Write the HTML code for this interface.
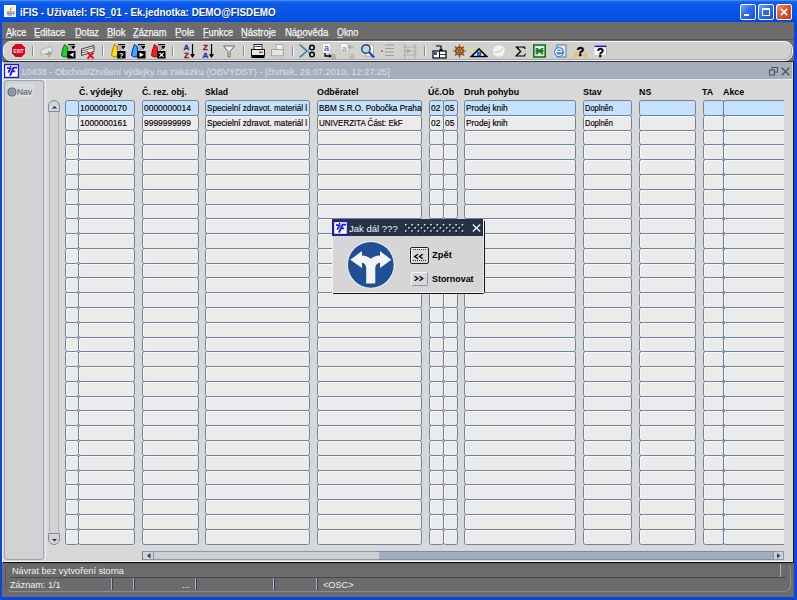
<!DOCTYPE html>
<html><head><meta charset="utf-8">
<style>
*{margin:0;padding:0;box-sizing:border-box}
html,body{width:797px;height:600px;overflow:hidden;background:#0a46dc;font-family:"Liberation Sans",sans-serif;position:relative}
.a{position:absolute}
svg.a{overflow:visible}
.t{position:absolute;line-height:1;white-space:nowrap;transform-origin:0 0}
#title{left:0;top:0;width:797px;height:22px;background:linear-gradient(#5aa0fa 0px,#1a66f0 1.5px,#0a58ea 4px,#0855e8 12px,#0652e4 18px,#0447d8 22px)}
.f{position:absolute;background:#ebebeb;border:1px solid #6d839f;border-radius:2.5px;box-shadow:inset 1px 1px 0 #f8f8f8}
.f.cur{background:#c6e2fa;box-shadow:none}
</style></head><body>
<div id="title" class="a"></div>
<svg class="a" style="left:4px;top:5px" width="12" height="12" viewBox="0 0 12 12"><rect x="0" y="0" width="12" height="12" fill="#f8f4ea"/>
<path d="M7.5 1.5 Q9 3 7 4.5 Q6 5.5 7 6.5 Q4.5 5.5 6.5 3.5 Q7.5 2.5 7.5 1.5Z" fill="#f07818"/>
<path d="M2.5 7 H9 M3 8.5 H8.5 M3.5 10 H8" stroke="#5a78a8" stroke-width="0.9"/><path d="M9.5 6.5 Q11.5 8 9 10" stroke="#3a5890" stroke-width="0.9" fill="none"/></svg>
<div class="t" style="left:19.90px;top:7.06px;font-size:10.8px;font-weight:bold;color:#fff;transform:scaleX(0.9110);text-shadow:1px 1px 0 #0a2a7a">iFIS - Uživatel: FIS_01 - Ek.jednotka: DEMO@FISDEMO</div>
<div class="a" style="left:740px;top:4px;width:16px;height:16px;border:1px solid #fff;border-radius:2px;background:linear-gradient(135deg,#7aa8f8 0%,#2e6cf0 45%,#1a50d8 100%)"></div>
<div class="a" style="left:744px;top:14px;width:5px;height:2px;background:#fff"></div>
<div class="a" style="left:758px;top:4px;width:16px;height:16px;border:1px solid #fff;border-radius:2px;background:linear-gradient(135deg,#7aa8f8 0%,#2e6cf0 45%,#1a50d8 100%)"></div>
<div class="a" style="left:762px;top:8px;width:8px;height:8px;border:1px solid #fff;border-top:2px solid #fff"></div>
<div class="a" style="left:776px;top:4px;width:16px;height:16px;border:1px solid #fff;border-radius:2px;background:linear-gradient(135deg,#f49a7c 0%,#e2552a 45%,#c83c12 100%)"></div>
<svg class="a" style="left:780px;top:8px" width="8" height="8" viewBox="0 0 8 8"><path d="M0.8 0.8 L7.2 7.2 M7.2 0.8 L0.8 7.2" stroke="#fff" stroke-width="1.7"/></svg>
<div class="a" style="left:2px;top:22px;width:792px;height:40px;background:#6c6c6c"></div>
<div class="a" style="left:2px;top:39px;width:792px;height:1px;background:#555"></div>
<div class="t" style="left:5.50px;top:27.88px;font-size:10.3px;color:#f8f8f8;transform:scaleX(0.8865);-webkit-text-stroke:0.25px #f0f0f0">Akce</div>
<div class="a" style="left:6.0px;top:37.3px;width:5.5px;height:1px;background:#c8c8c8"></div>
<div class="t" style="left:34.40px;top:27.88px;font-size:10.3px;color:#f8f8f8;transform:scaleX(0.9110);-webkit-text-stroke:0.25px #f0f0f0">Editace</div>
<div class="a" style="left:34.9px;top:37.3px;width:5.5px;height:1px;background:#c8c8c8"></div>
<div class="t" style="left:74.50px;top:27.88px;font-size:10.3px;color:#f8f8f8;transform:scaleX(0.8882);-webkit-text-stroke:0.25px #f0f0f0">Dotaz</div>
<div class="a" style="left:75.0px;top:37.3px;width:5.5px;height:1px;background:#c8c8c8"></div>
<div class="t" style="left:106.60px;top:27.88px;font-size:10.3px;color:#f8f8f8;transform:scaleX(0.9183);-webkit-text-stroke:0.25px #f0f0f0">Blok</div>
<div class="a" style="left:107.1px;top:37.3px;width:5.5px;height:1px;background:#c8c8c8"></div>
<div class="t" style="left:132.50px;top:27.88px;font-size:10.3px;color:#f8f8f8;transform:scaleX(0.9003);-webkit-text-stroke:0.25px #f0f0f0">Záznam</div>
<div class="a" style="left:133.0px;top:37.3px;width:5.5px;height:1px;background:#c8c8c8"></div>
<div class="t" style="left:175.00px;top:27.88px;font-size:10.3px;color:#f8f8f8;transform:scaleX(0.9459);-webkit-text-stroke:0.25px #f0f0f0">Pole</div>
<div class="a" style="left:175.5px;top:37.3px;width:5.5px;height:1px;background:#c8c8c8"></div>
<div class="t" style="left:202.50px;top:27.88px;font-size:10.3px;color:#f8f8f8;transform:scaleX(0.8911);-webkit-text-stroke:0.25px #f0f0f0">Funkce</div>
<div class="a" style="left:203.0px;top:37.3px;width:5.5px;height:1px;background:#c8c8c8"></div>
<div class="t" style="left:241.40px;top:27.88px;font-size:10.3px;color:#f8f8f8;transform:scaleX(0.9151);-webkit-text-stroke:0.25px #f0f0f0">Nástroje</div>
<div class="a" style="left:241.9px;top:37.3px;width:5.5px;height:1px;background:#c8c8c8"></div>
<div class="t" style="left:284.80px;top:27.88px;font-size:10.3px;color:#f8f8f8;transform:scaleX(0.9199);-webkit-text-stroke:0.25px #f0f0f0">Nápověda</div>
<div class="a" style="left:298.0px;top:37.3px;width:5.5px;height:1px;background:#c8c8c8"></div>
<div class="t" style="left:336.80px;top:27.88px;font-size:10.3px;color:#f8f8f8;transform:scaleX(0.8611);-webkit-text-stroke:0.25px #f0f0f0">Okno</div>
<div class="a" style="left:337.3px;top:37.3px;width:5.5px;height:1px;background:#c8c8c8"></div>
<div class="a" style="left:2.5px;top:40.5px;width:790.5px;height:20px;background:#d1d1ce;border:1px solid #f6f6f6;border-radius:8px;box-shadow:inset -1px -1px 0 #a8a8a8"></div>
<svg class="a" style="left:10.5px;top:43px" width="15" height="15" viewBox="0 0 15 15"><polygon points="4.5,0.5 10.5,0.5 14.5,4.5 14.5,10.5 10.5,14.5 4.5,14.5 0.5,10.5 0.5,4.5" fill="#dc0818" stroke="#c8f0f0" stroke-width="0.8"/>
<text x="2.6" y="9.9" font-family="Liberation Sans" font-weight="bold" font-size="6" fill="#fff" textLength="10" lengthAdjust="spacingAndGlyphs">EXIT</text></svg>
<div class="a" style="left:32.0px;top:46px;width:1px;height:10px;background:#7d8da8"></div><div class="a" style="left:33.0px;top:46px;width:1px;height:10px;background:#f4f4f4"></div>
<svg class="a" style="left:40px;top:44px" width="15" height="14" viewBox="0 0 15 14"><polygon points="1,6 12,2 12,8 1,11" fill="#e8e8e8" stroke="#a8a8a8" stroke-width="0.8"/>
<path d="M9 7 V13 M6 10 H12" stroke="#9a9a9a" stroke-width="1.3"/></svg>
<svg class="a" style="left:61px;top:43px" width="15" height="16" viewBox="0 0 15 16"><polygon points="0.5,12.5 1.5,7 3.5,1.5 6,3.5 6.8,8 6.2,13.5 3,14" fill="#18d818" stroke="#063" stroke-width="1"/>
<path d="M7 1.6 H14" stroke="#000" stroke-width="1.2"/><polygon points="10,3 14.5,3 12.2,6.5" fill="#000"/>
<path d="M6 3 L10 8 M8 2.5 L11 7" stroke="#777" stroke-width="0.8"/>
<rect x="6.2" y="8" width="8.3" height="7.5" fill="#000"/><polygon points="8.5,11.7 12.5,9.5 12.5,14" fill="#fff"/></svg>
<svg class="a" style="left:81px;top:44px" width="14" height="15" viewBox="0 0 14 15"><polygon points="0.5,5 13,1.5 13,7.5 0.5,11.5" fill="#e8e8e8" stroke="#333" stroke-width="0.9"/>
<path d="M1 7 L13 3.5 M1 9 L7 7.3" stroke="#555" stroke-width="0.8"/>
<path d="M6.5 8.5 L12.5 14.5 M12.5 8.5 L6.5 14.5" stroke="#e81010" stroke-width="1.9"/></svg>
<div class="a" style="left:101.5px;top:46px;width:1px;height:10px;background:#7d8da8"></div><div class="a" style="left:102.5px;top:46px;width:1px;height:10px;background:#f4f4f4"></div>
<svg class="a" style="left:111px;top:43px" width="15" height="16" viewBox="0 0 15 16"><polygon points="0.5,12.5 1.5,7 3.5,1.5 6,3.5 6.8,8 6.2,13.5 3,14" fill="#f8e000" stroke="#c07000" stroke-width="1"/>
<path d="M7 1.6 H14" stroke="#000" stroke-width="1.2"/><polygon points="10,3 14.5,3 12.2,6.5" fill="#000"/>
<path d="M6 3 L10 8 M8 2.5 L11 7" stroke="#777" stroke-width="0.8"/>
<rect x="6.2" y="8" width="8.3" height="7.5" fill="#000"/><text x="10.4" y="14.6" font-family="Liberation Sans" font-weight="bold" font-size="7.5" fill="#fff" text-anchor="middle">?</text></svg>
<svg class="a" style="left:131px;top:43px" width="15" height="16" viewBox="0 0 15 16"><polygon points="0.5,12.5 1.5,7 3.5,1.5 6,3.5 6.8,8 6.2,13.5 3,14" fill="#30b0ff" stroke="#0818d0" stroke-width="1"/>
<path d="M7 1.6 H14" stroke="#000" stroke-width="1.2"/><polygon points="10,3 14.5,3 12.2,6.5" fill="#000"/>
<path d="M6 3 L10 8 M8 2.5 L11 7" stroke="#777" stroke-width="0.8"/>
<rect x="6.2" y="8" width="8.3" height="7.5" fill="#000"/><polygon points="8.5,9.5 13,11.7 8.5,14" fill="#fff"/></svg>
<svg class="a" style="left:151px;top:43px" width="15" height="16" viewBox="0 0 15 16"><polygon points="0.5,12.5 1.5,7 3.5,1.5 6,3.5 6.8,8 6.2,13.5 3,14" fill="#f02020" stroke="#a00" stroke-width="1"/>
<path d="M7 1.6 H14" stroke="#000" stroke-width="1.2"/><polygon points="10,3 14.5,3 12.2,6.5" fill="#000"/>
<path d="M6 3 L10 8 M8 2.5 L11 7" stroke="#777" stroke-width="0.8"/>
<rect x="6.2" y="8" width="8.3" height="7.5" fill="#000"/><path d="M8.5 9.8 L12.5 13.8 M12.5 9.8 L8.5 13.8" stroke="#fff" stroke-width="1.2"/></svg>
<div class="a" style="left:172.0px;top:46px;width:1px;height:10px;background:#7d8da8"></div><div class="a" style="left:173.0px;top:46px;width:1px;height:10px;background:#f4f4f4"></div>
<svg class="a" style="left:183px;top:43px" width="12" height="16" viewBox="0 0 12 16"><text x="3.5" y="7" font-family="Liberation Sans" font-weight="bold" font-size="8" fill="#1030b0" stroke="#1030b0" stroke-width="0.3" text-anchor="middle">A</text>
<text x="3.5" y="14.5" font-family="Liberation Sans" font-weight="bold" font-size="8" fill="#901818" stroke="#901818" stroke-width="0.3" text-anchor="middle">Z</text>
<path d="M9.5 1 V14" stroke="#000" stroke-width="1.2"/><polygon points="7,11 12,11 9.5,15" fill="#000"/></svg>
<svg class="a" style="left:202px;top:43px" width="12" height="16" viewBox="0 0 12 16"><text x="3.5" y="7" font-family="Liberation Sans" font-weight="bold" font-size="8" fill="#901818" stroke="#901818" stroke-width="0.3" text-anchor="middle">Z</text>
<text x="3.5" y="14.5" font-family="Liberation Sans" font-weight="bold" font-size="8" fill="#1030b0" stroke="#1030b0" stroke-width="0.3" text-anchor="middle">A</text>
<path d="M9.5 1 V14" stroke="#000" stroke-width="1.2"/><polygon points="7,11 12,11 9.5,15" fill="#000"/></svg>
<svg class="a" style="left:223px;top:45px" width="12" height="13" viewBox="0 0 12 13"><polygon points="0.5,1 11.5,1 7,6.5 7,12 5,12 5,6.5" fill="#f0f0f0" stroke="#6a6a6a" stroke-width="1"/></svg>
<div class="a" style="left:242.5px;top:46px;width:1px;height:10px;background:#7d8da8"></div><div class="a" style="left:243.5px;top:46px;width:1px;height:10px;background:#f4f4f4"></div>
<svg class="a" style="left:251px;top:44px" width="14" height="15" viewBox="0 0 14 15"><rect x="3" y="0.5" width="8" height="5" fill="#fff" stroke="#000" stroke-width="0.8"/>
<path d="M4 2.5 H10" stroke="#2040c0" stroke-width="1"/>
<rect x="0.5" y="5.5" width="13" height="6" fill="#e8e8e8" stroke="#000" stroke-width="0.9"/>
<rect x="0.5" y="11" width="13" height="3" fill="#000"/>
<rect x="8" y="7.5" width="2" height="1.5" fill="#e02020"/><rect x="10" y="7.5" width="2" height="1.5" fill="#20c020"/></svg>
<svg class="a" style="left:271px;top:44px" width="14" height="15" viewBox="0 0 14 15"><rect x="5" y="0.5" width="7" height="5" fill="#f0f0f0" stroke="#a0a0a0" stroke-width="0.8"/>
<rect x="0.5" y="5.5" width="12" height="6" fill="#e4e4e4" stroke="#a0a0a0" stroke-width="0.9"/>
<rect x="1" y="11.5" width="11" height="2.5" fill="#c8c8c8"/></svg>
<div class="a" style="left:292.0px;top:46px;width:1px;height:10px;background:#7d8da8"></div><div class="a" style="left:293.0px;top:46px;width:1px;height:10px;background:#f4f4f4"></div>
<svg class="a" style="left:299px;top:43px" width="17" height="16" viewBox="0 0 17 16"><path d="M0.5 1.5 L11 10.5 M0.5 14.5 L11 5.5" stroke="#70b8c0" stroke-width="2.2"/>
<path d="M1 2 L8 8 M1 14 L8 8" stroke="#1c3c48" stroke-width="0.7"/>
<circle cx="13" cy="4.5" r="2.3" fill="none" stroke="#000" stroke-width="1.5"/>
<circle cx="13" cy="11.5" r="2.3" fill="none" stroke="#000" stroke-width="1.5"/></svg>
<svg class="a" style="left:321px;top:43px" width="15" height="16" viewBox="0 0 15 16"><rect x="1.5" y="0.5" width="8" height="9.5" fill="#fff" stroke="#bbb" stroke-width="0.6"/>
<text x="5.5" y="8" font-family="Liberation Sans" font-size="9" fill="#0818e8" text-anchor="middle">a</text>
<path d="M4 10 V13 H9" stroke="#000" stroke-width="1.3" fill="none"/><polygon points="8,11 11,13 8,15" fill="#000"/>
<text x="12.5" y="15.5" font-family="Liberation Sans" font-size="9" fill="#909090" text-anchor="middle">a</text></svg>
<svg class="a" style="left:340px;top:43px" width="15" height="16" viewBox="0 0 15 16"><rect x="0.5" y="0.5" width="7.5" height="9.5" fill="#f2f2f2" stroke="#b8b8b8" stroke-width="0.6"/>
<text x="4.2" y="8.5" font-family="Liberation Sans" font-weight="bold" font-size="9.5" fill="#a8a8a8" text-anchor="middle">a</text>
<path d="M8.5 4 H13.5 M10.5 2 L8.5 4 L10.5 6" stroke="#9a9a9a" stroke-width="1" fill="none"/>
<text x="11.5" y="15.5" font-family="Liberation Sans" font-size="9" fill="#a8a8a8" text-anchor="middle">a</text></svg>
<svg class="a" style="left:360px;top:43px" width="16" height="16" viewBox="0 0 16 16"><rect x="5.5" y="2" width="8" height="11" fill="#fff" stroke="#999" stroke-width="0.7"/>
<circle cx="6" cy="6" r="4.2" fill="#b8d8f0" stroke="#203050" stroke-width="1.3"/>
<path d="M9 9 L14 14.5" stroke="#1040d0" stroke-width="2.2"/></svg>
<svg class="a" style="left:381px;top:44px" width="14" height="14" viewBox="0 0 14 14"><rect x="0" y="6" width="2" height="2" fill="#909090"/>
<path d="M4 1 H13 M4 4.5 H13 M4 8 H13 M4 11.5 H13" stroke="#a0a0a0" stroke-width="1.1"/></svg>
<svg class="a" style="left:403px;top:43px" width="14" height="16" viewBox="0 0 14 16"><path d="M2 1 V15 M12 1 V15" stroke="#a8a8a8" stroke-width="1"/>
<path d="M0 4 H14 M0 8 H14 M0 12 H14" stroke="#b0b0b0" stroke-width="1"/>
<polygon points="4,6 8,8 4,10" fill="#a0a0a0"/></svg>
<div class="a" style="left:423.5px;top:46px;width:1px;height:10px;background:#7d8da8"></div><div class="a" style="left:424.5px;top:46px;width:1px;height:10px;background:#f4f4f4"></div>
<svg class="a" style="left:432px;top:43px" width="15" height="16" viewBox="0 0 15 16"><path d="M1 1.5 H7" stroke="#a0c8f0" stroke-width="1"/>
<path d="M4 3 H9 V7" stroke="#000" stroke-width="1.2" fill="none"/><polygon points="7,6 11,6 9,9" fill="#000"/>
<rect x="1" y="8" width="13" height="7" fill="#fff" stroke="#000" stroke-width="1.2"/>
<rect x="2" y="9" width="3" height="3" fill="#2060c0"/>
<path d="M7.5 8 V15" stroke="#000" stroke-width="1"/><path d="M8 11.5 H14" stroke="#000" stroke-width="0.8"/></svg>
<svg class="a" style="left:453px;top:44px" width="13" height="14" viewBox="0 0 13 14"><circle cx="6.5" cy="7" r="3.8" fill="none" stroke="#8b4a10" stroke-width="1.5"/>
<path d="M6.5 0.5 V13.5 M0 7 H13 M2 2.5 L11 11.5 M11 2.5 L2 11.5" stroke="#8b4a10" stroke-width="1.2"/>
<circle cx="6.5" cy="7" r="1.3" fill="#c07030"/></svg>
<svg class="a" style="left:471px;top:44px" width="16" height="14" viewBox="0 0 16 14"><path d="M3 4 L5 5.5 M13 4 L11 5.5 M8 2 V3.5" stroke="#f0e040" stroke-width="1.1"/>
<polygon points="8,5 15.5,12.5 0.5,12.5" fill="#fff" stroke="#000" stroke-width="1.7"/>
<circle cx="8" cy="10" r="2.4" fill="#0050e0"/><circle cx="8" cy="10" r="1" fill="#30a0ff"/></svg>
<svg class="a" style="left:492px;top:44px" width="14" height="14" viewBox="0 0 14 14"><circle cx="7" cy="7" r="6.4" fill="#f2f2f2" stroke="#c8c8c8" stroke-width="0.9"/>
<path d="M3 8 H7 L11 4" stroke="#b8b8b8" stroke-width="0.9" fill="none"/></svg>
<svg class="a" style="left:515px;top:46px" width="11" height="11" viewBox="0 0 11 11"><polygon points="0.5,0.5 10,0.5 10.5,3 9.5,3 8.5,1.6 3,1.6 6.5,5.5 2.5,9.4 9,9.4 10,7.5 10.8,7.5 10,10.5 0.3,10.5 0.3,9.8 4.8,5.3 0.5,1.2" fill="#000"/></svg>
<svg class="a" style="left:533px;top:44px" width="13" height="14" viewBox="0 0 13 14"><rect x="0.8" y="1" width="11.4" height="12" fill="#d8e8d8" stroke="#0c6a14" stroke-width="1.5"/>
<path d="M3 4 L10 10 M10 4 L3 10 M2.5 7 H10.5" stroke="#1a7a2a" stroke-width="1.8"/><path d="M3 3.5 H10" stroke="#fff" stroke-width="0.8"/></svg>
<svg class="a" style="left:553px;top:43px" width="14" height="16" viewBox="0 0 14 16"><rect x="4" y="2" width="9" height="12" fill="#e4ecf8" stroke="#5a6a90" stroke-width="0.9"/>
<circle cx="6" cy="9" r="5" fill="#3a8ae0"/>
<path d="M2.5 8.5 H9" stroke="#fff" stroke-width="1.3"/><path d="M9 8 A3.3 3.3 0 1 0 8.6 11" stroke="#fff" stroke-width="1.2" fill="none"/></svg>
<svg class="a" style="left:573px;top:43px" width="15" height="16" viewBox="0 0 15 16"><rect x="1" y="9.5" width="3.5" height="5" fill="#f0c050"/><rect x="10.5" y="9.5" width="3.5" height="5" fill="#f0c050"/>
<text x="7.5" y="12.5" font-family="Liberation Sans" font-weight="bold" font-size="13" fill="#000" stroke="#000" stroke-width="0.5" text-anchor="middle">?</text></svg>
<svg class="a" style="left:594px;top:43px" width="13" height="16" viewBox="0 0 13 16"><rect x="0.5" y="2.5" width="12" height="1.8" fill="#2020e0"/><rect x="0.5" y="4.3" width="12" height="7.5" fill="#fff"/><path d="M12.5 4.3 V12" stroke="#999" stroke-width="0.8"/>
<text x="6.5" y="13.5" font-family="Liberation Sans" font-weight="bold" font-size="12" fill="#000" stroke="#000" stroke-width="0.4" text-anchor="middle">?</text></svg>
<div class="a" style="left:2px;top:60.5px;width:792px;height:502px;background:#d8d8d8;border-left:1.7px solid #f2eee4;border-right:1.5px solid #1a1a1a;border-bottom:1px solid #111;border-top:1.5px solid #333"></div>
<div class="a" style="left:3.7px;top:560.5px;width:788.8px;height:1px;background:#f2f2f2"></div>
<div class="a" style="left:3.7px;top:62px;width:788.3px;height:16.5px;background:#a4aebd"></div>
<svg class="a" style="left:4px;top:64px" width="15" height="14" viewBox="0 0 15 14"><rect x="0.6" y="0.6" width="13.8" height="12.8" fill="#fffdf4" stroke="#1414f0" stroke-width="1.2"/><path d="M3 3.9 L6.6 4.4 L4.2 8.6 M9.6 3.6 L6 11.6 M8.8 3.6 H13 M7.6 7.4 H11.2" stroke="#1818e8" stroke-width="1.9" fill="none"/><circle cx="6.6" cy="2.6" r="0.8" fill="#000"/></svg>
<div class="t" style="left:20.50px;top:66.87px;font-size:9.6px;color:#dce0e8;transform:scaleX(0.9631);">10438 - Obchod/Zrušení výdejky na zakázku (OBVYDST) - [čtvrtek, 29.07.2010, 12:27:25]</div>
<svg class="a" style="left:769px;top:67px" width="9" height="9" viewBox="0 0 9 9"><rect x="3" y="0.5" width="5.5" height="4.5" fill="none" stroke="#505050" stroke-width="1"/><rect x="0.5" y="3" width="5" height="5" fill="#a4aebd" stroke="#505050" stroke-width="1"/></svg>
<svg class="a" style="left:781px;top:67px" width="9" height="9" viewBox="0 0 9 9"><path d="M0.8 0.8 L8.2 8.2 M8.2 0.8 L0.8 8.2" stroke="#505050" stroke-width="1.3"/></svg>
<div class="a" style="left:3.7px;top:78.5px;width:788.3px;height:1px;background:#ececec"></div>
<div class="a" style="left:4px;top:79.5px;width:40px;height:480px;background:#d2d2d2;border:1px solid #97a4b8;border-radius:3px"></div>
<div class="a" style="left:8px;top:84px;width:26px;height:14px;background:#dadada"></div>
<svg class="a" style="left:7px;top:86.5px" width="10" height="10" viewBox="0 0 10 10"><circle cx="5" cy="5" r="4" fill="#98a2b0" stroke="#5a6a84" stroke-width="1.2"/><circle cx="5" cy="5" r="2.2" fill="#8a94a4"/></svg>
<div class="t" style="left:17.20px;top:86.87px;font-size:9.6px;color:#56647a;transform:scaleX(0.8786);text-shadow:0 1px 0 #f4f4f4;-webkit-text-stroke:0.2px #56647a">Nav</div>
<div class="a" style="left:49px;top:111px;width:10px;height:422px;background:#d3d3d1;border-left:1px dotted #98a0ae;border-right:1px dotted #98a0ae"></div>
<div class="a" style="left:44.5px;top:80px;width:1px;height:479px;background:#ececf0"></div>
<div class="a" style="left:48px;top:100px;width:12px;height:12px;background:#d4d4d4;border:1px solid #7d8ca2;border-radius:6px 6px 0 0"></div>
<svg class="a" style="left:51.5px;top:105.5px" width="5" height="2.5" viewBox="0 0 5 2.5"><polygon points="0,2.5 2.5,0 5,2.5" fill="#1c2a5c"/></svg>
<div class="a" style="left:48px;top:533px;width:12px;height:12px;background:#d4d4d4;border:1px solid #7d8ca2;border-radius:0 0 6px 6px"></div>
<svg class="a" style="left:51.5px;top:538.5px" width="5" height="2.5" viewBox="0 0 5 2.5"><polygon points="0,0 5,0 2.5,2.5" fill="#1c2a5c"/></svg>
<div class="f cur" style="left:65px;top:100px;width:14px;height:16px;"></div>
<div class="f cur" style="left:78px;top:100px;width:57px;height:16px;"></div>
<div class="f cur" style="left:142px;top:100px;width:57px;height:16px;"></div>
<div class="f cur" style="left:205px;top:100px;width:105px;height:16px;"></div>
<div class="f cur" style="left:317px;top:100px;width:105px;height:16px;"></div>
<div class="f cur" style="left:429px;top:100px;width:15px;height:16px;"></div>
<div class="f cur" style="left:443px;top:100px;width:15px;height:16px;"></div>
<div class="f cur" style="left:464px;top:100px;width:112px;height:16px;"></div>
<div class="f cur" style="left:583px;top:100px;width:49px;height:16px;"></div>
<div class="f cur" style="left:639px;top:100px;width:57px;height:16px;"></div>
<div class="f cur" style="left:703px;top:100px;width:21px;height:16px;"></div>
<div class="f cur" style="left:723px;top:100px;width:61px;height:16px;border-right:none;border-radius:2.5px 0 0 2.5px;"></div>
<div class="f" style="left:65px;top:115px;width:14px;height:16px;"></div>
<div class="f" style="left:78px;top:115px;width:57px;height:16px;"></div>
<div class="f" style="left:142px;top:115px;width:57px;height:16px;"></div>
<div class="f" style="left:205px;top:115px;width:105px;height:16px;"></div>
<div class="f" style="left:317px;top:115px;width:105px;height:16px;"></div>
<div class="f" style="left:429px;top:115px;width:15px;height:16px;"></div>
<div class="f" style="left:443px;top:115px;width:15px;height:16px;"></div>
<div class="f" style="left:464px;top:115px;width:112px;height:16px;"></div>
<div class="f" style="left:583px;top:115px;width:49px;height:16px;"></div>
<div class="f" style="left:639px;top:115px;width:57px;height:16px;"></div>
<div class="f" style="left:703px;top:115px;width:21px;height:16px;"></div>
<div class="f" style="left:723px;top:115px;width:61px;height:16px;border-right:none;border-radius:2.5px 0 0 2.5px;"></div>
<div class="f" style="left:65px;top:130px;width:14px;height:15px;"></div>
<div class="f" style="left:78px;top:130px;width:57px;height:15px;"></div>
<div class="f" style="left:142px;top:130px;width:57px;height:15px;"></div>
<div class="f" style="left:205px;top:130px;width:105px;height:15px;"></div>
<div class="f" style="left:317px;top:130px;width:105px;height:15px;"></div>
<div class="f" style="left:429px;top:130px;width:15px;height:15px;"></div>
<div class="f" style="left:443px;top:130px;width:15px;height:15px;"></div>
<div class="f" style="left:464px;top:130px;width:112px;height:15px;"></div>
<div class="f" style="left:583px;top:130px;width:49px;height:15px;"></div>
<div class="f" style="left:639px;top:130px;width:57px;height:15px;"></div>
<div class="f" style="left:703px;top:130px;width:21px;height:15px;"></div>
<div class="f" style="left:723px;top:130px;width:61px;height:15px;border-right:none;border-radius:2.5px 0 0 2.5px;"></div>
<div class="f" style="left:65px;top:144px;width:14px;height:16px;"></div>
<div class="f" style="left:78px;top:144px;width:57px;height:16px;"></div>
<div class="f" style="left:142px;top:144px;width:57px;height:16px;"></div>
<div class="f" style="left:205px;top:144px;width:105px;height:16px;"></div>
<div class="f" style="left:317px;top:144px;width:105px;height:16px;"></div>
<div class="f" style="left:429px;top:144px;width:15px;height:16px;"></div>
<div class="f" style="left:443px;top:144px;width:15px;height:16px;"></div>
<div class="f" style="left:464px;top:144px;width:112px;height:16px;"></div>
<div class="f" style="left:583px;top:144px;width:49px;height:16px;"></div>
<div class="f" style="left:639px;top:144px;width:57px;height:16px;"></div>
<div class="f" style="left:703px;top:144px;width:21px;height:16px;"></div>
<div class="f" style="left:723px;top:144px;width:61px;height:16px;border-right:none;border-radius:2.5px 0 0 2.5px;"></div>
<div class="f" style="left:65px;top:159px;width:14px;height:16px;"></div>
<div class="f" style="left:78px;top:159px;width:57px;height:16px;"></div>
<div class="f" style="left:142px;top:159px;width:57px;height:16px;"></div>
<div class="f" style="left:205px;top:159px;width:105px;height:16px;"></div>
<div class="f" style="left:317px;top:159px;width:105px;height:16px;"></div>
<div class="f" style="left:429px;top:159px;width:15px;height:16px;"></div>
<div class="f" style="left:443px;top:159px;width:15px;height:16px;"></div>
<div class="f" style="left:464px;top:159px;width:112px;height:16px;"></div>
<div class="f" style="left:583px;top:159px;width:49px;height:16px;"></div>
<div class="f" style="left:639px;top:159px;width:57px;height:16px;"></div>
<div class="f" style="left:703px;top:159px;width:21px;height:16px;"></div>
<div class="f" style="left:723px;top:159px;width:61px;height:16px;border-right:none;border-radius:2.5px 0 0 2.5px;"></div>
<div class="f" style="left:65px;top:174px;width:14px;height:16px;"></div>
<div class="f" style="left:78px;top:174px;width:57px;height:16px;"></div>
<div class="f" style="left:142px;top:174px;width:57px;height:16px;"></div>
<div class="f" style="left:205px;top:174px;width:105px;height:16px;"></div>
<div class="f" style="left:317px;top:174px;width:105px;height:16px;"></div>
<div class="f" style="left:429px;top:174px;width:15px;height:16px;"></div>
<div class="f" style="left:443px;top:174px;width:15px;height:16px;"></div>
<div class="f" style="left:464px;top:174px;width:112px;height:16px;"></div>
<div class="f" style="left:583px;top:174px;width:49px;height:16px;"></div>
<div class="f" style="left:639px;top:174px;width:57px;height:16px;"></div>
<div class="f" style="left:703px;top:174px;width:21px;height:16px;"></div>
<div class="f" style="left:723px;top:174px;width:61px;height:16px;border-right:none;border-radius:2.5px 0 0 2.5px;"></div>
<div class="f" style="left:65px;top:189px;width:14px;height:16px;"></div>
<div class="f" style="left:78px;top:189px;width:57px;height:16px;"></div>
<div class="f" style="left:142px;top:189px;width:57px;height:16px;"></div>
<div class="f" style="left:205px;top:189px;width:105px;height:16px;"></div>
<div class="f" style="left:317px;top:189px;width:105px;height:16px;"></div>
<div class="f" style="left:429px;top:189px;width:15px;height:16px;"></div>
<div class="f" style="left:443px;top:189px;width:15px;height:16px;"></div>
<div class="f" style="left:464px;top:189px;width:112px;height:16px;"></div>
<div class="f" style="left:583px;top:189px;width:49px;height:16px;"></div>
<div class="f" style="left:639px;top:189px;width:57px;height:16px;"></div>
<div class="f" style="left:703px;top:189px;width:21px;height:16px;"></div>
<div class="f" style="left:723px;top:189px;width:61px;height:16px;border-right:none;border-radius:2.5px 0 0 2.5px;"></div>
<div class="f" style="left:65px;top:204px;width:14px;height:15px;"></div>
<div class="f" style="left:78px;top:204px;width:57px;height:15px;"></div>
<div class="f" style="left:142px;top:204px;width:57px;height:15px;"></div>
<div class="f" style="left:205px;top:204px;width:105px;height:15px;"></div>
<div class="f" style="left:317px;top:204px;width:105px;height:15px;"></div>
<div class="f" style="left:429px;top:204px;width:15px;height:15px;"></div>
<div class="f" style="left:443px;top:204px;width:15px;height:15px;"></div>
<div class="f" style="left:464px;top:204px;width:112px;height:15px;"></div>
<div class="f" style="left:583px;top:204px;width:49px;height:15px;"></div>
<div class="f" style="left:639px;top:204px;width:57px;height:15px;"></div>
<div class="f" style="left:703px;top:204px;width:21px;height:15px;"></div>
<div class="f" style="left:723px;top:204px;width:61px;height:15px;border-right:none;border-radius:2.5px 0 0 2.5px;"></div>
<div class="f" style="left:65px;top:218px;width:14px;height:16px;"></div>
<div class="f" style="left:78px;top:218px;width:57px;height:16px;"></div>
<div class="f" style="left:142px;top:218px;width:57px;height:16px;"></div>
<div class="f" style="left:205px;top:218px;width:105px;height:16px;"></div>
<div class="f" style="left:317px;top:218px;width:105px;height:16px;"></div>
<div class="f" style="left:429px;top:218px;width:15px;height:16px;"></div>
<div class="f" style="left:443px;top:218px;width:15px;height:16px;"></div>
<div class="f" style="left:464px;top:218px;width:112px;height:16px;"></div>
<div class="f" style="left:583px;top:218px;width:49px;height:16px;"></div>
<div class="f" style="left:639px;top:218px;width:57px;height:16px;"></div>
<div class="f" style="left:703px;top:218px;width:21px;height:16px;"></div>
<div class="f" style="left:723px;top:218px;width:61px;height:16px;border-right:none;border-radius:2.5px 0 0 2.5px;"></div>
<div class="f" style="left:65px;top:233px;width:14px;height:16px;"></div>
<div class="f" style="left:78px;top:233px;width:57px;height:16px;"></div>
<div class="f" style="left:142px;top:233px;width:57px;height:16px;"></div>
<div class="f" style="left:205px;top:233px;width:105px;height:16px;"></div>
<div class="f" style="left:317px;top:233px;width:105px;height:16px;"></div>
<div class="f" style="left:429px;top:233px;width:15px;height:16px;"></div>
<div class="f" style="left:443px;top:233px;width:15px;height:16px;"></div>
<div class="f" style="left:464px;top:233px;width:112px;height:16px;"></div>
<div class="f" style="left:583px;top:233px;width:49px;height:16px;"></div>
<div class="f" style="left:639px;top:233px;width:57px;height:16px;"></div>
<div class="f" style="left:703px;top:233px;width:21px;height:16px;"></div>
<div class="f" style="left:723px;top:233px;width:61px;height:16px;border-right:none;border-radius:2.5px 0 0 2.5px;"></div>
<div class="f" style="left:65px;top:248px;width:14px;height:16px;"></div>
<div class="f" style="left:78px;top:248px;width:57px;height:16px;"></div>
<div class="f" style="left:142px;top:248px;width:57px;height:16px;"></div>
<div class="f" style="left:205px;top:248px;width:105px;height:16px;"></div>
<div class="f" style="left:317px;top:248px;width:105px;height:16px;"></div>
<div class="f" style="left:429px;top:248px;width:15px;height:16px;"></div>
<div class="f" style="left:443px;top:248px;width:15px;height:16px;"></div>
<div class="f" style="left:464px;top:248px;width:112px;height:16px;"></div>
<div class="f" style="left:583px;top:248px;width:49px;height:16px;"></div>
<div class="f" style="left:639px;top:248px;width:57px;height:16px;"></div>
<div class="f" style="left:703px;top:248px;width:21px;height:16px;"></div>
<div class="f" style="left:723px;top:248px;width:61px;height:16px;border-right:none;border-radius:2.5px 0 0 2.5px;"></div>
<div class="f" style="left:65px;top:263px;width:14px;height:15px;"></div>
<div class="f" style="left:78px;top:263px;width:57px;height:15px;"></div>
<div class="f" style="left:142px;top:263px;width:57px;height:15px;"></div>
<div class="f" style="left:205px;top:263px;width:105px;height:15px;"></div>
<div class="f" style="left:317px;top:263px;width:105px;height:15px;"></div>
<div class="f" style="left:429px;top:263px;width:15px;height:15px;"></div>
<div class="f" style="left:443px;top:263px;width:15px;height:15px;"></div>
<div class="f" style="left:464px;top:263px;width:112px;height:15px;"></div>
<div class="f" style="left:583px;top:263px;width:49px;height:15px;"></div>
<div class="f" style="left:639px;top:263px;width:57px;height:15px;"></div>
<div class="f" style="left:703px;top:263px;width:21px;height:15px;"></div>
<div class="f" style="left:723px;top:263px;width:61px;height:15px;border-right:none;border-radius:2.5px 0 0 2.5px;"></div>
<div class="f" style="left:65px;top:277px;width:14px;height:16px;"></div>
<div class="f" style="left:78px;top:277px;width:57px;height:16px;"></div>
<div class="f" style="left:142px;top:277px;width:57px;height:16px;"></div>
<div class="f" style="left:205px;top:277px;width:105px;height:16px;"></div>
<div class="f" style="left:317px;top:277px;width:105px;height:16px;"></div>
<div class="f" style="left:429px;top:277px;width:15px;height:16px;"></div>
<div class="f" style="left:443px;top:277px;width:15px;height:16px;"></div>
<div class="f" style="left:464px;top:277px;width:112px;height:16px;"></div>
<div class="f" style="left:583px;top:277px;width:49px;height:16px;"></div>
<div class="f" style="left:639px;top:277px;width:57px;height:16px;"></div>
<div class="f" style="left:703px;top:277px;width:21px;height:16px;"></div>
<div class="f" style="left:723px;top:277px;width:61px;height:16px;border-right:none;border-radius:2.5px 0 0 2.5px;"></div>
<div class="f" style="left:65px;top:292px;width:14px;height:16px;"></div>
<div class="f" style="left:78px;top:292px;width:57px;height:16px;"></div>
<div class="f" style="left:142px;top:292px;width:57px;height:16px;"></div>
<div class="f" style="left:205px;top:292px;width:105px;height:16px;"></div>
<div class="f" style="left:317px;top:292px;width:105px;height:16px;"></div>
<div class="f" style="left:429px;top:292px;width:15px;height:16px;"></div>
<div class="f" style="left:443px;top:292px;width:15px;height:16px;"></div>
<div class="f" style="left:464px;top:292px;width:112px;height:16px;"></div>
<div class="f" style="left:583px;top:292px;width:49px;height:16px;"></div>
<div class="f" style="left:639px;top:292px;width:57px;height:16px;"></div>
<div class="f" style="left:703px;top:292px;width:21px;height:16px;"></div>
<div class="f" style="left:723px;top:292px;width:61px;height:16px;border-right:none;border-radius:2.5px 0 0 2.5px;"></div>
<div class="f" style="left:65px;top:307px;width:14px;height:16px;"></div>
<div class="f" style="left:78px;top:307px;width:57px;height:16px;"></div>
<div class="f" style="left:142px;top:307px;width:57px;height:16px;"></div>
<div class="f" style="left:205px;top:307px;width:105px;height:16px;"></div>
<div class="f" style="left:317px;top:307px;width:105px;height:16px;"></div>
<div class="f" style="left:429px;top:307px;width:15px;height:16px;"></div>
<div class="f" style="left:443px;top:307px;width:15px;height:16px;"></div>
<div class="f" style="left:464px;top:307px;width:112px;height:16px;"></div>
<div class="f" style="left:583px;top:307px;width:49px;height:16px;"></div>
<div class="f" style="left:639px;top:307px;width:57px;height:16px;"></div>
<div class="f" style="left:703px;top:307px;width:21px;height:16px;"></div>
<div class="f" style="left:723px;top:307px;width:61px;height:16px;border-right:none;border-radius:2.5px 0 0 2.5px;"></div>
<div class="f" style="left:65px;top:322px;width:14px;height:16px;"></div>
<div class="f" style="left:78px;top:322px;width:57px;height:16px;"></div>
<div class="f" style="left:142px;top:322px;width:57px;height:16px;"></div>
<div class="f" style="left:205px;top:322px;width:105px;height:16px;"></div>
<div class="f" style="left:317px;top:322px;width:105px;height:16px;"></div>
<div class="f" style="left:429px;top:322px;width:15px;height:16px;"></div>
<div class="f" style="left:443px;top:322px;width:15px;height:16px;"></div>
<div class="f" style="left:464px;top:322px;width:112px;height:16px;"></div>
<div class="f" style="left:583px;top:322px;width:49px;height:16px;"></div>
<div class="f" style="left:639px;top:322px;width:57px;height:16px;"></div>
<div class="f" style="left:703px;top:322px;width:21px;height:16px;"></div>
<div class="f" style="left:723px;top:322px;width:61px;height:16px;border-right:none;border-radius:2.5px 0 0 2.5px;"></div>
<div class="f" style="left:65px;top:337px;width:14px;height:15px;"></div>
<div class="f" style="left:78px;top:337px;width:57px;height:15px;"></div>
<div class="f" style="left:142px;top:337px;width:57px;height:15px;"></div>
<div class="f" style="left:205px;top:337px;width:105px;height:15px;"></div>
<div class="f" style="left:317px;top:337px;width:105px;height:15px;"></div>
<div class="f" style="left:429px;top:337px;width:15px;height:15px;"></div>
<div class="f" style="left:443px;top:337px;width:15px;height:15px;"></div>
<div class="f" style="left:464px;top:337px;width:112px;height:15px;"></div>
<div class="f" style="left:583px;top:337px;width:49px;height:15px;"></div>
<div class="f" style="left:639px;top:337px;width:57px;height:15px;"></div>
<div class="f" style="left:703px;top:337px;width:21px;height:15px;"></div>
<div class="f" style="left:723px;top:337px;width:61px;height:15px;border-right:none;border-radius:2.5px 0 0 2.5px;"></div>
<div class="f" style="left:65px;top:351px;width:14px;height:16px;"></div>
<div class="f" style="left:78px;top:351px;width:57px;height:16px;"></div>
<div class="f" style="left:142px;top:351px;width:57px;height:16px;"></div>
<div class="f" style="left:205px;top:351px;width:105px;height:16px;"></div>
<div class="f" style="left:317px;top:351px;width:105px;height:16px;"></div>
<div class="f" style="left:429px;top:351px;width:15px;height:16px;"></div>
<div class="f" style="left:443px;top:351px;width:15px;height:16px;"></div>
<div class="f" style="left:464px;top:351px;width:112px;height:16px;"></div>
<div class="f" style="left:583px;top:351px;width:49px;height:16px;"></div>
<div class="f" style="left:639px;top:351px;width:57px;height:16px;"></div>
<div class="f" style="left:703px;top:351px;width:21px;height:16px;"></div>
<div class="f" style="left:723px;top:351px;width:61px;height:16px;border-right:none;border-radius:2.5px 0 0 2.5px;"></div>
<div class="f" style="left:65px;top:366px;width:14px;height:16px;"></div>
<div class="f" style="left:78px;top:366px;width:57px;height:16px;"></div>
<div class="f" style="left:142px;top:366px;width:57px;height:16px;"></div>
<div class="f" style="left:205px;top:366px;width:105px;height:16px;"></div>
<div class="f" style="left:317px;top:366px;width:105px;height:16px;"></div>
<div class="f" style="left:429px;top:366px;width:15px;height:16px;"></div>
<div class="f" style="left:443px;top:366px;width:15px;height:16px;"></div>
<div class="f" style="left:464px;top:366px;width:112px;height:16px;"></div>
<div class="f" style="left:583px;top:366px;width:49px;height:16px;"></div>
<div class="f" style="left:639px;top:366px;width:57px;height:16px;"></div>
<div class="f" style="left:703px;top:366px;width:21px;height:16px;"></div>
<div class="f" style="left:723px;top:366px;width:61px;height:16px;border-right:none;border-radius:2.5px 0 0 2.5px;"></div>
<div class="f" style="left:65px;top:381px;width:14px;height:16px;"></div>
<div class="f" style="left:78px;top:381px;width:57px;height:16px;"></div>
<div class="f" style="left:142px;top:381px;width:57px;height:16px;"></div>
<div class="f" style="left:205px;top:381px;width:105px;height:16px;"></div>
<div class="f" style="left:317px;top:381px;width:105px;height:16px;"></div>
<div class="f" style="left:429px;top:381px;width:15px;height:16px;"></div>
<div class="f" style="left:443px;top:381px;width:15px;height:16px;"></div>
<div class="f" style="left:464px;top:381px;width:112px;height:16px;"></div>
<div class="f" style="left:583px;top:381px;width:49px;height:16px;"></div>
<div class="f" style="left:639px;top:381px;width:57px;height:16px;"></div>
<div class="f" style="left:703px;top:381px;width:21px;height:16px;"></div>
<div class="f" style="left:723px;top:381px;width:61px;height:16px;border-right:none;border-radius:2.5px 0 0 2.5px;"></div>
<div class="f" style="left:65px;top:396px;width:14px;height:15px;"></div>
<div class="f" style="left:78px;top:396px;width:57px;height:15px;"></div>
<div class="f" style="left:142px;top:396px;width:57px;height:15px;"></div>
<div class="f" style="left:205px;top:396px;width:105px;height:15px;"></div>
<div class="f" style="left:317px;top:396px;width:105px;height:15px;"></div>
<div class="f" style="left:429px;top:396px;width:15px;height:15px;"></div>
<div class="f" style="left:443px;top:396px;width:15px;height:15px;"></div>
<div class="f" style="left:464px;top:396px;width:112px;height:15px;"></div>
<div class="f" style="left:583px;top:396px;width:49px;height:15px;"></div>
<div class="f" style="left:639px;top:396px;width:57px;height:15px;"></div>
<div class="f" style="left:703px;top:396px;width:21px;height:15px;"></div>
<div class="f" style="left:723px;top:396px;width:61px;height:15px;border-right:none;border-radius:2.5px 0 0 2.5px;"></div>
<div class="f" style="left:65px;top:410px;width:14px;height:16px;"></div>
<div class="f" style="left:78px;top:410px;width:57px;height:16px;"></div>
<div class="f" style="left:142px;top:410px;width:57px;height:16px;"></div>
<div class="f" style="left:205px;top:410px;width:105px;height:16px;"></div>
<div class="f" style="left:317px;top:410px;width:105px;height:16px;"></div>
<div class="f" style="left:429px;top:410px;width:15px;height:16px;"></div>
<div class="f" style="left:443px;top:410px;width:15px;height:16px;"></div>
<div class="f" style="left:464px;top:410px;width:112px;height:16px;"></div>
<div class="f" style="left:583px;top:410px;width:49px;height:16px;"></div>
<div class="f" style="left:639px;top:410px;width:57px;height:16px;"></div>
<div class="f" style="left:703px;top:410px;width:21px;height:16px;"></div>
<div class="f" style="left:723px;top:410px;width:61px;height:16px;border-right:none;border-radius:2.5px 0 0 2.5px;"></div>
<div class="f" style="left:65px;top:425px;width:14px;height:16px;"></div>
<div class="f" style="left:78px;top:425px;width:57px;height:16px;"></div>
<div class="f" style="left:142px;top:425px;width:57px;height:16px;"></div>
<div class="f" style="left:205px;top:425px;width:105px;height:16px;"></div>
<div class="f" style="left:317px;top:425px;width:105px;height:16px;"></div>
<div class="f" style="left:429px;top:425px;width:15px;height:16px;"></div>
<div class="f" style="left:443px;top:425px;width:15px;height:16px;"></div>
<div class="f" style="left:464px;top:425px;width:112px;height:16px;"></div>
<div class="f" style="left:583px;top:425px;width:49px;height:16px;"></div>
<div class="f" style="left:639px;top:425px;width:57px;height:16px;"></div>
<div class="f" style="left:703px;top:425px;width:21px;height:16px;"></div>
<div class="f" style="left:723px;top:425px;width:61px;height:16px;border-right:none;border-radius:2.5px 0 0 2.5px;"></div>
<div class="f" style="left:65px;top:440px;width:14px;height:16px;"></div>
<div class="f" style="left:78px;top:440px;width:57px;height:16px;"></div>
<div class="f" style="left:142px;top:440px;width:57px;height:16px;"></div>
<div class="f" style="left:205px;top:440px;width:105px;height:16px;"></div>
<div class="f" style="left:317px;top:440px;width:105px;height:16px;"></div>
<div class="f" style="left:429px;top:440px;width:15px;height:16px;"></div>
<div class="f" style="left:443px;top:440px;width:15px;height:16px;"></div>
<div class="f" style="left:464px;top:440px;width:112px;height:16px;"></div>
<div class="f" style="left:583px;top:440px;width:49px;height:16px;"></div>
<div class="f" style="left:639px;top:440px;width:57px;height:16px;"></div>
<div class="f" style="left:703px;top:440px;width:21px;height:16px;"></div>
<div class="f" style="left:723px;top:440px;width:61px;height:16px;border-right:none;border-radius:2.5px 0 0 2.5px;"></div>
<div class="f" style="left:65px;top:455px;width:14px;height:16px;"></div>
<div class="f" style="left:78px;top:455px;width:57px;height:16px;"></div>
<div class="f" style="left:142px;top:455px;width:57px;height:16px;"></div>
<div class="f" style="left:205px;top:455px;width:105px;height:16px;"></div>
<div class="f" style="left:317px;top:455px;width:105px;height:16px;"></div>
<div class="f" style="left:429px;top:455px;width:15px;height:16px;"></div>
<div class="f" style="left:443px;top:455px;width:15px;height:16px;"></div>
<div class="f" style="left:464px;top:455px;width:112px;height:16px;"></div>
<div class="f" style="left:583px;top:455px;width:49px;height:16px;"></div>
<div class="f" style="left:639px;top:455px;width:57px;height:16px;"></div>
<div class="f" style="left:703px;top:455px;width:21px;height:16px;"></div>
<div class="f" style="left:723px;top:455px;width:61px;height:16px;border-right:none;border-radius:2.5px 0 0 2.5px;"></div>
<div class="f" style="left:65px;top:470px;width:14px;height:15px;"></div>
<div class="f" style="left:78px;top:470px;width:57px;height:15px;"></div>
<div class="f" style="left:142px;top:470px;width:57px;height:15px;"></div>
<div class="f" style="left:205px;top:470px;width:105px;height:15px;"></div>
<div class="f" style="left:317px;top:470px;width:105px;height:15px;"></div>
<div class="f" style="left:429px;top:470px;width:15px;height:15px;"></div>
<div class="f" style="left:443px;top:470px;width:15px;height:15px;"></div>
<div class="f" style="left:464px;top:470px;width:112px;height:15px;"></div>
<div class="f" style="left:583px;top:470px;width:49px;height:15px;"></div>
<div class="f" style="left:639px;top:470px;width:57px;height:15px;"></div>
<div class="f" style="left:703px;top:470px;width:21px;height:15px;"></div>
<div class="f" style="left:723px;top:470px;width:61px;height:15px;border-right:none;border-radius:2.5px 0 0 2.5px;"></div>
<div class="f" style="left:65px;top:484px;width:14px;height:16px;"></div>
<div class="f" style="left:78px;top:484px;width:57px;height:16px;"></div>
<div class="f" style="left:142px;top:484px;width:57px;height:16px;"></div>
<div class="f" style="left:205px;top:484px;width:105px;height:16px;"></div>
<div class="f" style="left:317px;top:484px;width:105px;height:16px;"></div>
<div class="f" style="left:429px;top:484px;width:15px;height:16px;"></div>
<div class="f" style="left:443px;top:484px;width:15px;height:16px;"></div>
<div class="f" style="left:464px;top:484px;width:112px;height:16px;"></div>
<div class="f" style="left:583px;top:484px;width:49px;height:16px;"></div>
<div class="f" style="left:639px;top:484px;width:57px;height:16px;"></div>
<div class="f" style="left:703px;top:484px;width:21px;height:16px;"></div>
<div class="f" style="left:723px;top:484px;width:61px;height:16px;border-right:none;border-radius:2.5px 0 0 2.5px;"></div>
<div class="f" style="left:65px;top:499px;width:14px;height:16px;"></div>
<div class="f" style="left:78px;top:499px;width:57px;height:16px;"></div>
<div class="f" style="left:142px;top:499px;width:57px;height:16px;"></div>
<div class="f" style="left:205px;top:499px;width:105px;height:16px;"></div>
<div class="f" style="left:317px;top:499px;width:105px;height:16px;"></div>
<div class="f" style="left:429px;top:499px;width:15px;height:16px;"></div>
<div class="f" style="left:443px;top:499px;width:15px;height:16px;"></div>
<div class="f" style="left:464px;top:499px;width:112px;height:16px;"></div>
<div class="f" style="left:583px;top:499px;width:49px;height:16px;"></div>
<div class="f" style="left:639px;top:499px;width:57px;height:16px;"></div>
<div class="f" style="left:703px;top:499px;width:21px;height:16px;"></div>
<div class="f" style="left:723px;top:499px;width:61px;height:16px;border-right:none;border-radius:2.5px 0 0 2.5px;"></div>
<div class="f" style="left:65px;top:514px;width:14px;height:16px;"></div>
<div class="f" style="left:78px;top:514px;width:57px;height:16px;"></div>
<div class="f" style="left:142px;top:514px;width:57px;height:16px;"></div>
<div class="f" style="left:205px;top:514px;width:105px;height:16px;"></div>
<div class="f" style="left:317px;top:514px;width:105px;height:16px;"></div>
<div class="f" style="left:429px;top:514px;width:15px;height:16px;"></div>
<div class="f" style="left:443px;top:514px;width:15px;height:16px;"></div>
<div class="f" style="left:464px;top:514px;width:112px;height:16px;"></div>
<div class="f" style="left:583px;top:514px;width:49px;height:16px;"></div>
<div class="f" style="left:639px;top:514px;width:57px;height:16px;"></div>
<div class="f" style="left:703px;top:514px;width:21px;height:16px;"></div>
<div class="f" style="left:723px;top:514px;width:61px;height:16px;border-right:none;border-radius:2.5px 0 0 2.5px;"></div>
<div class="f" style="left:65px;top:529px;width:14px;height:16px;"></div>
<div class="f" style="left:78px;top:529px;width:57px;height:16px;"></div>
<div class="f" style="left:142px;top:529px;width:57px;height:16px;"></div>
<div class="f" style="left:205px;top:529px;width:105px;height:16px;"></div>
<div class="f" style="left:317px;top:529px;width:105px;height:16px;"></div>
<div class="f" style="left:429px;top:529px;width:15px;height:16px;"></div>
<div class="f" style="left:443px;top:529px;width:15px;height:16px;"></div>
<div class="f" style="left:464px;top:529px;width:112px;height:16px;"></div>
<div class="f" style="left:583px;top:529px;width:49px;height:16px;"></div>
<div class="f" style="left:639px;top:529px;width:57px;height:16px;"></div>
<div class="f" style="left:703px;top:529px;width:21px;height:16px;"></div>
<div class="f" style="left:723px;top:529px;width:61px;height:16px;border-right:none;border-radius:2.5px 0 0 2.5px;"></div>
<div class="t" style="left:80.20px;top:104.32px;font-size:8.6px;color:#000;transform:scaleX(0.9826);-webkit-text-stroke:0.15px #000">1000000170</div>
<div class="t" style="left:144.20px;top:104.32px;font-size:8.6px;color:#000;transform:scaleX(0.9826);-webkit-text-stroke:0.15px #000">0000000014</div>
<div class="t" style="left:207.20px;top:104.32px;font-size:8.6px;color:#000;transform:scaleX(0.9485);-webkit-text-stroke:0.15px #000">Specielní zdravot. materiál l</div>
<div class="t" style="left:319.20px;top:104.32px;font-size:8.6px;color:#000;transform:scaleX(0.9488);-webkit-text-stroke:0.15px #000">BBM S.R.O. Pobočka Praha</div>
<div class="t" style="left:431.20px;top:104.32px;font-size:8.6px;color:#000;transform:scaleX(0.9826);-webkit-text-stroke:0.15px #000">02</div>
<div class="t" style="left:445.20px;top:104.32px;font-size:8.6px;color:#000;transform:scaleX(0.9826);-webkit-text-stroke:0.15px #000">05</div>
<div class="t" style="left:466.20px;top:104.32px;font-size:8.6px;color:#000;transform:scaleX(0.9692);-webkit-text-stroke:0.15px #000">Prodej knih</div>
<div class="t" style="left:585.20px;top:104.32px;font-size:8.6px;color:#000;transform:scaleX(0.8740);-webkit-text-stroke:0.15px #000">Doplněn</div>
<div class="t" style="left:80.20px;top:119.10px;font-size:8.6px;color:#000;transform:scaleX(0.9826);-webkit-text-stroke:0.15px #000">1000000161</div>
<div class="t" style="left:144.20px;top:119.10px;font-size:8.6px;color:#000;transform:scaleX(0.9826);-webkit-text-stroke:0.15px #000">9999999999</div>
<div class="t" style="left:207.20px;top:119.10px;font-size:8.6px;color:#000;transform:scaleX(0.9485);-webkit-text-stroke:0.15px #000">Specielní zdravot. materiál l</div>
<div class="t" style="left:319.20px;top:119.10px;font-size:8.6px;color:#000;transform:scaleX(0.9284);-webkit-text-stroke:0.15px #000">UNIVERZITA Část: EkF</div>
<div class="t" style="left:431.20px;top:119.10px;font-size:8.6px;color:#000;transform:scaleX(0.9826);-webkit-text-stroke:0.15px #000">02</div>
<div class="t" style="left:445.20px;top:119.10px;font-size:8.6px;color:#000;transform:scaleX(0.9826);-webkit-text-stroke:0.15px #000">05</div>
<div class="t" style="left:466.20px;top:119.10px;font-size:8.6px;color:#000;transform:scaleX(0.9692);-webkit-text-stroke:0.15px #000">Prodej knih</div>
<div class="t" style="left:585.20px;top:119.10px;font-size:8.6px;color:#000;transform:scaleX(0.8740);-webkit-text-stroke:0.15px #000">Doplněn</div>
<div class="t" style="left:78.60px;top:87.74px;font-size:8.7px;font-weight:bold;color:#000;transform:scaleX(1.0176);">Č. výdejky</div>
<div class="t" style="left:142.20px;top:87.74px;font-size:8.7px;font-weight:bold;color:#000;transform:scaleX(1.0185);">Č. rez. obj.</div>
<div class="t" style="left:205.00px;top:87.74px;font-size:8.7px;font-weight:bold;color:#000;transform:scaleX(0.9909);">Sklad</div>
<div class="t" style="left:317.00px;top:87.74px;font-size:8.7px;font-weight:bold;color:#000;transform:scaleX(1.0200);">Odběratel</div>
<div class="t" style="left:428.00px;top:87.74px;font-size:8.7px;font-weight:bold;color:#000;transform:scaleX(1.0200);">Úč.Ob</div>
<div class="t" style="left:464.00px;top:87.74px;font-size:8.7px;font-weight:bold;color:#000;transform:scaleX(1.0200);">Druh pohybu</div>
<div class="t" style="left:583.00px;top:87.74px;font-size:8.7px;font-weight:bold;color:#000;transform:scaleX(1.0200);">Stav</div>
<div class="t" style="left:639.00px;top:87.74px;font-size:8.7px;font-weight:bold;color:#000;transform:scaleX(1.0200);">NS</div>
<div class="t" style="left:702.00px;top:87.74px;font-size:8.7px;font-weight:bold;color:#000;transform:scaleX(1.0200);">TA</div>
<div class="t" style="left:723.00px;top:87.74px;font-size:8.7px;font-weight:bold;color:#000;transform:scaleX(1.0200);">Akce</div>
<div class="a" style="left:142px;top:551px;width:642px;height:9px;background:#cfcfcf;border-top:1px solid #8a98ae;border-bottom:1px solid #8a98ae"></div>
<div class="a" style="left:379px;top:551px;width:394px;height:9px;background:#a0adbd;border-top:1px solid #7a8eaa;border-bottom:1px solid #7a8eaa"></div>
<div class="a" style="left:142px;top:551px;width:12px;height:9px;background:#d4d4d4;border:1px solid #8a98ae;border-left-color:#6a7890"></div>
<svg class="a" style="left:146.5px;top:553px" width="3.5" height="5.5" viewBox="0 0 3.5 5.5"><polygon points="3.5,0 0,2.75 3.5,5.5" fill="#2c3c70"/></svg>
<div class="a" style="left:773px;top:551px;width:11px;height:9px;background:#d0d0d0;border:1px solid #8a98ae"></div>
<svg class="a" style="left:777px;top:553px" width="3.5" height="5.5" viewBox="0 0 3.5 5.5"><polygon points="0,0 3.5,2.75 0,5.5" fill="#2c3c70"/></svg>
<div class="a" style="left:2px;top:562.5px;width:792px;height:34.3px;background:#6b6b6b"></div>
<div class="a" style="left:5px;top:563px;width:786px;height:29px;border:1px solid #8c8c8c;border-top-color:#5a5a5a;border-left-color:#555b66;border-radius:7px"></div>
<div class="a" style="left:10px;top:577px;width:776px;height:1px;background:#3e4a5e"></div>
<div class="a" style="left:111.0px;top:578px;width:1px;height:12px;background:#a8b4c8"></div>
<div class="a" style="left:112.0px;top:578px;width:1px;height:12px;background:#3a4252"></div>
<div class="a" style="left:132.5px;top:578px;width:1px;height:12px;background:#a8b4c8"></div>
<div class="a" style="left:133.5px;top:578px;width:1px;height:12px;background:#3a4252"></div>
<div class="a" style="left:194.5px;top:578px;width:1px;height:12px;background:#a8b4c8"></div>
<div class="a" style="left:195.5px;top:578px;width:1px;height:12px;background:#3a4252"></div>
<div class="a" style="left:272.5px;top:578px;width:1px;height:12px;background:#a8b4c8"></div>
<div class="a" style="left:273.5px;top:578px;width:1px;height:12px;background:#3a4252"></div>
<div class="a" style="left:316.0px;top:578px;width:1px;height:12px;background:#a8b4c8"></div>
<div class="a" style="left:317.0px;top:578px;width:1px;height:12px;background:#3a4252"></div>
<div class="a" style="left:779.5px;top:564px;width:1px;height:13px;background:#a8b4c8"></div>
<div class="t" style="left:12.40px;top:565.87px;font-size:9.6px;color:#f0f0f0;transform:scaleX(0.9541);">Návrat bez vytvoření storna</div>
<div class="t" style="left:9.60px;top:579.57px;font-size:9.6px;color:#f0f0f0;transform:scaleX(0.9483);">Záznam: 1/1</div>
<div class="t" style="left:182.00px;top:579.57px;font-size:9.6px;color:#f0f0f0;">...</div>
<div class="t" style="left:322.60px;top:579.57px;font-size:9.6px;color:#f0f0f0;transform:scaleX(0.9558);">&lt;OSC&gt;</div>
<div class="a" style="left:333px;top:221px;width:152px;height:73px;background:#141414;border-radius:0 0 3px 0"></div>
<div class="a" style="left:331.5px;top:219px;width:152.5px;height:73.5px;background:#d6d6d6;border-left:1px solid #f0f0f0;border-bottom:1px solid #f4f4f4;border-right:1px solid #f0f0f0"></div>
<div class="a" style="left:331.5px;top:219px;width:151.5px;height:17px;background:#263246"></div>
<svg class="a" style="left:333px;top:221px" width="15" height="14" viewBox="0 0 15 14"><rect x="0.6" y="0.6" width="13.8" height="12.8" fill="#fffdf4" stroke="#1414f0" stroke-width="1.2"/><path d="M3 3.9 L6.6 4.4 L4.2 8.6 M9.6 3.6 L6 11.6 M8.8 3.6 H13 M7.6 7.4 H11.2" stroke="#1818e8" stroke-width="1.9" fill="none"/><circle cx="6.6" cy="2.6" r="0.8" fill="#000"/></svg>
<div class="t" style="left:348.60px;top:223.50px;font-size:9.8px;color:#f4f4f4;transform:scaleX(0.9716);">Jak dál ???</div>
<svg class="a" style="left:405.3px;top:224.2px" width="62" height="10" viewBox="0 0 62 10"><rect x="0.00" y="0.0" width="1.6" height="1.6" fill="#e4eaf2"/><rect x="1.30" y="1.3" width="1.3" height="1.3" fill="#05080e"/><rect x="6.30" y="0.0" width="1.6" height="1.6" fill="#e4eaf2"/><rect x="7.60" y="1.3" width="1.3" height="1.3" fill="#05080e"/><rect x="12.60" y="0.0" width="1.6" height="1.6" fill="#e4eaf2"/><rect x="13.90" y="1.3" width="1.3" height="1.3" fill="#05080e"/><rect x="18.90" y="0.0" width="1.6" height="1.6" fill="#e4eaf2"/><rect x="20.20" y="1.3" width="1.3" height="1.3" fill="#05080e"/><rect x="25.20" y="0.0" width="1.6" height="1.6" fill="#e4eaf2"/><rect x="26.50" y="1.3" width="1.3" height="1.3" fill="#05080e"/><rect x="31.50" y="0.0" width="1.6" height="1.6" fill="#e4eaf2"/><rect x="32.80" y="1.3" width="1.3" height="1.3" fill="#05080e"/><rect x="37.80" y="0.0" width="1.6" height="1.6" fill="#e4eaf2"/><rect x="39.10" y="1.3" width="1.3" height="1.3" fill="#05080e"/><rect x="44.10" y="0.0" width="1.6" height="1.6" fill="#e4eaf2"/><rect x="45.40" y="1.3" width="1.3" height="1.3" fill="#05080e"/><rect x="50.40" y="0.0" width="1.6" height="1.6" fill="#e4eaf2"/><rect x="51.70" y="1.3" width="1.3" height="1.3" fill="#05080e"/><rect x="56.70" y="0.0" width="1.6" height="1.6" fill="#e4eaf2"/><rect x="58.00" y="1.3" width="1.3" height="1.3" fill="#05080e"/><rect x="3.15" y="3.1" width="1.6" height="1.6" fill="#e4eaf2"/><rect x="4.45" y="4.4" width="1.3" height="1.3" fill="#05080e"/><rect x="9.45" y="3.1" width="1.6" height="1.6" fill="#e4eaf2"/><rect x="10.75" y="4.4" width="1.3" height="1.3" fill="#05080e"/><rect x="15.75" y="3.1" width="1.6" height="1.6" fill="#e4eaf2"/><rect x="17.05" y="4.4" width="1.3" height="1.3" fill="#05080e"/><rect x="22.05" y="3.1" width="1.6" height="1.6" fill="#e4eaf2"/><rect x="23.35" y="4.4" width="1.3" height="1.3" fill="#05080e"/><rect x="28.35" y="3.1" width="1.6" height="1.6" fill="#e4eaf2"/><rect x="29.65" y="4.4" width="1.3" height="1.3" fill="#05080e"/><rect x="34.65" y="3.1" width="1.6" height="1.6" fill="#e4eaf2"/><rect x="35.95" y="4.4" width="1.3" height="1.3" fill="#05080e"/><rect x="40.95" y="3.1" width="1.6" height="1.6" fill="#e4eaf2"/><rect x="42.25" y="4.4" width="1.3" height="1.3" fill="#05080e"/><rect x="47.25" y="3.1" width="1.6" height="1.6" fill="#e4eaf2"/><rect x="48.55" y="4.4" width="1.3" height="1.3" fill="#05080e"/><rect x="53.55" y="3.1" width="1.6" height="1.6" fill="#e4eaf2"/><rect x="54.85" y="4.4" width="1.3" height="1.3" fill="#05080e"/><rect x="0.00" y="6.2" width="1.6" height="1.6" fill="#e4eaf2"/><rect x="1.30" y="7.5" width="1.3" height="1.3" fill="#05080e"/><rect x="6.30" y="6.2" width="1.6" height="1.6" fill="#e4eaf2"/><rect x="7.60" y="7.5" width="1.3" height="1.3" fill="#05080e"/><rect x="12.60" y="6.2" width="1.6" height="1.6" fill="#e4eaf2"/><rect x="13.90" y="7.5" width="1.3" height="1.3" fill="#05080e"/><rect x="18.90" y="6.2" width="1.6" height="1.6" fill="#e4eaf2"/><rect x="20.20" y="7.5" width="1.3" height="1.3" fill="#05080e"/><rect x="25.20" y="6.2" width="1.6" height="1.6" fill="#e4eaf2"/><rect x="26.50" y="7.5" width="1.3" height="1.3" fill="#05080e"/><rect x="31.50" y="6.2" width="1.6" height="1.6" fill="#e4eaf2"/><rect x="32.80" y="7.5" width="1.3" height="1.3" fill="#05080e"/><rect x="37.80" y="6.2" width="1.6" height="1.6" fill="#e4eaf2"/><rect x="39.10" y="7.5" width="1.3" height="1.3" fill="#05080e"/><rect x="44.10" y="6.2" width="1.6" height="1.6" fill="#e4eaf2"/><rect x="45.40" y="7.5" width="1.3" height="1.3" fill="#05080e"/><rect x="50.40" y="6.2" width="1.6" height="1.6" fill="#e4eaf2"/><rect x="51.70" y="7.5" width="1.3" height="1.3" fill="#05080e"/><rect x="56.70" y="6.2" width="1.6" height="1.6" fill="#e4eaf2"/><rect x="58.00" y="7.5" width="1.3" height="1.3" fill="#05080e"/></svg>
<svg class="a" style="left:472px;top:224px" width="9" height="8" viewBox="0 0 9 8"><path d="M0.8 0.5 L8.2 7.5 M8.2 0.5 L0.8 7.5" stroke="#f0f0f0" stroke-width="1.4"/></svg>
<svg class="a" style="left:345px;top:239px" width="52" height="52" viewBox="0 0 52 52"><circle cx="25.8" cy="25.8" r="23.8" fill="#f4f4f4"/><circle cx="25.8" cy="25.8" r="22.9" fill="#1f4f94"/>
<path d="M21.2 44.6 L21.2 28 Q20.5 24.5 17 23.4 L17 29 L5.2 20.8 L17 12.1 L17 16.5 Q22.5 16.8 25.8 19.8 Q29 16.8 35 16.5 L35 12.1 L46.4 20.8 L35 29 L35 23.4 Q31 24.5 30.3 28 L30.3 44.6 Z" fill="#f4f4f4"/></svg>
<div class="a" style="left:409.5px;top:247px;width:19px;height:17px;background:#d6d6d6;border:1.5px solid #202020;border-radius:2px;box-shadow:inset 1px 1px 0 #fff"></div>
<div class="a" style="left:413px;top:249px;width:12.5px;height:12px;border-top:1px dotted #303030;border-bottom:1px dotted #303030"></div>
<svg class="a" style="left:414px;top:253.5px" width="10" height="5" viewBox="0 0 10 5"><path d="M4 0.3 L0.7 2.5 L4 4.7 M8.8 0.3 L5.5 2.5 L8.8 4.7" stroke="#000" stroke-width="1.3" fill="none"/></svg>
<div class="t" style="left:431.60px;top:251.35px;font-size:8.8px;font-weight:bold;color:#000;transform:scaleX(1.0659);">Zpět</div>
<div class="a" style="left:410.5px;top:271.5px;width:17.5px;height:14px;background:#d8d8d8;border:1px solid #f4f4f4;border-right-color:#8896b0;border-bottom-color:#8896b0;border-radius:2px"></div>
<svg class="a" style="left:413.5px;top:276px" width="10" height="5" viewBox="0 0 10 5"><path d="M0.7 0.3 L4 2.5 L0.7 4.7 M5.5 0.3 L8.8 2.5 L5.5 4.7" stroke="#000" stroke-width="1.3" fill="none"/></svg>
<div class="t" style="left:431.80px;top:274.55px;font-size:8.8px;font-weight:bold;color:#000;transform:scaleX(1.0129);">Stornovat</div>
</body></html>
